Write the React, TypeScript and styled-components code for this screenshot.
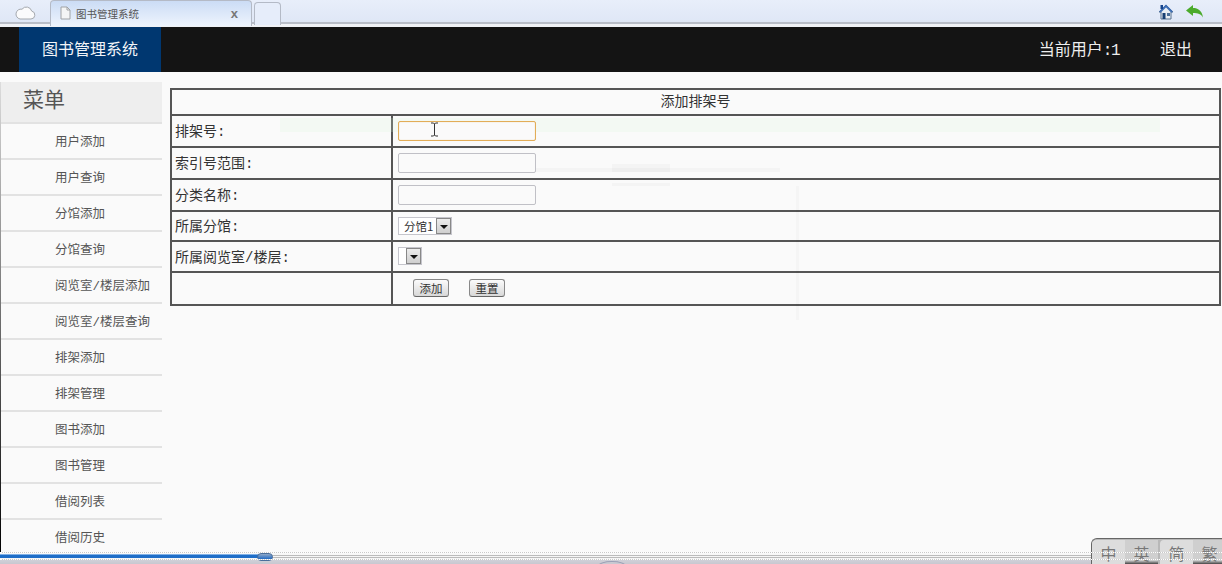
import styled, { createGlobalStyle } from "styled-components";

const GlobalStyle = createGlobalStyle`
html, body {
  margin: 0;
  padding: 0;
  background: #fafafa;
}
* {
  box-sizing: border-box;
}
`;

const FONT = `"Noto Sans CJK SC", "Liberation Sans", sans-serif`;
// the page's ascii glyphs sit wider than Noto's, the mono face gets close
const TEXT_FONT = `"Liberation Mono", "Noto Sans CJK SC", monospace`;

const menuItems = [
  "用户添加",
  "用户查询",
  "分馆添加",
  "分馆查询",
  "阅览室/楼层添加",
  "阅览室/楼层查询",
  "排架添加",
  "排架管理",
  "图书添加",
  "图书管理",
  "借阅列表",
  "借阅历史",
];

function App() {
  return (
    <>
      <GlobalStyle />
      <Page>
        <TabBar>
          <CloudButton>
            <svg width="21" height="15" viewBox="0 0 21 15">
              <path d="M5 14h11a4 4 0 0 0 .7-7.900A5.500 5.500 0 0 0 7 4.200 5 5 0 0 0 5 14z" fill="#fbfbfc" stroke="#a4a8ae" strokeWidth="1" />
            </svg>
          </CloudButton>
          <ActiveTab>
            <svg width="11" height="14" viewBox="0 0 11 14">
              <path d="M1 1h6l3 3v9H1z" fill="#f4f5f5" stroke="#a0a3a6" strokeWidth="1" />
              <path d="M7 1v3h3" fill="none" stroke="#a0a3a6" strokeWidth="1" />
            </svg>
            <TabTitle>图书管理系统</TabTitle>
            <TabClose>x</TabClose>
          </ActiveTab>
          <NewTab />
          <TabIcons>
            <svg width="16" height="16" viewBox="0 0 16 16">
              <path d="M8 1 1 8h2v7h10V8h2z" fill="#e8edf3" stroke="#56708f" strokeWidth="1" />
              <path d="M2 8 8 2l6 6" fill="none" stroke="#3f6fb5" strokeWidth="2" />
              <rect x="2.500" y="1" width="2.500" height="4" fill="#16448c" />
              <rect x="4.500" y="9" width="3" height="6" fill="#173f73" />
              <rect x="9" y="9" width="3" height="3" fill="#4a6e99" />
            </svg>
            <svg width="17" height="13" viewBox="0 0 17 13">
              <path d="M0 5.500 7 0v3c5 0 9 2.500 10 9.500-2-3.500-5-4.500-10-4.500v3z" fill="#4bab2b" />
            </svg>
          </TabIcons>
        </TabBar>
        <NavBar>
          <Brand>图书管理系统</Brand>
          <UserArea>
            <NavText>
              当前用户<NavAscii>:1</NavAscii>
            </NavText>
            <NavText>退出</NavText>
          </UserArea>
        </NavBar>
        <Main>
          <Sidebar>
            <MenuTitle>菜单</MenuTitle>
            {menuItems.map((item) => (
              <MenuItem key={item}>{item}</MenuItem>
            ))}
          </Sidebar>
          <Content>
            <FormTable>
              <colgroup>
                <col style={{ width: 221 }} />
                <col />
              </colgroup>
              <tbody>
                <HeadRow>
                  <HeadCell colSpan={2}>添加排架号</HeadCell>
                </HeadRow>
                <Row $height={32}>
                  <LabelCell>排架号:</LabelCell>
                  <FieldCell>
                    <TextField $focused />
                  </FieldCell>
                </Row>
                <Row $height={32}>
                  <LabelCell>索引号范围:</LabelCell>
                  <FieldCell>
                    <TextField />
                  </FieldCell>
                </Row>
                <Row $height={32}>
                  <LabelCell>分类名称:</LabelCell>
                  <FieldCell>
                    <TextField />
                  </FieldCell>
                </Row>
                <Row $height={30}>
                  <LabelCell>所属分馆:</LabelCell>
                  <FieldCell>
                    <SelectBox>
                      <SelectValue>分馆1</SelectValue>
                      <SelectArrow />
                    </SelectBox>
                  </FieldCell>
                </Row>
                <Row $height={31}>
                  <LabelCell>所属阅览室/楼层:</LabelCell>
                  <FieldCell>
                    <SelectBox>
                      <SelectValue />
                      <SelectArrow />
                    </SelectBox>
                  </FieldCell>
                </Row>
                <Row $height={33}>
                  <LabelCell />
                  <FieldCell>
                    <ButtonRow>
                      <FormButton>添加</FormButton>
                      <FormButton>重置</FormButton>
                    </ButtonRow>
                  </FieldCell>
                </Row>
              </tbody>
            </FormTable>
            <TextCursor width="9" height="15" viewBox="0 0 9 15">
              <path d="M1 1h2.500l1 1 1-1H8M4.500 2v11M1 14h2.500l1-1 1 1H8" fill="none" stroke="#333" strokeWidth="1" />
            </TextCursor>
            <Ghost $left={110} $top={36} $w={880} $h={14} $color="rgba(214, 245, 214, 0.2)" />
            <Ghost $left={283} $top={86} $w={327} $h={4} $color="rgba(0, 0, 0, 0.025)" />
            <Ghost $left={442} $top={82} $w={58} $h={8} $color="rgba(0, 0, 0, 0.025)" />
            <Ghost $left={442} $top={101} $w={58} $h={3} $color="rgba(0, 0, 0, 0.025)" />
            <Ghost $left={626} $top={104} $w={3} $h={134} $color="rgba(0, 0, 0, 0.02)" />
          </Content>
        </Main>
        <PlayerBar>
          <Dots />
          <Progress>
            <Played />
            <Knob />
          </Progress>
          <Dots />
          <Arch />
          <LangSwitch>
            <LangGroup>
              <LangKey>中</LangKey>
              <LangKey $active>英</LangKey>
            </LangGroup>
            <LangGroup>
              <LangKey>简</LangKey>
              <LangKey $active>繁</LangKey>
            </LangGroup>
          </LangSwitch>
        </PlayerBar>
      </Page>
    </>
  );
}

const Page = styled.div`
  width: 1222px;
  height: 564px;
  display: flex;
  flex-direction: column;
  overflow: hidden;
  position: relative;
  background: #fafafa;
  font-family: ${TEXT_FONT};
`;

const TabBar = styled.div`
  height: 27px;
  flex: none;
  display: flex;
  align-items: flex-start;
  padding-left: 1px;
  background: linear-gradient(
    #e8eefa 0,
    #dfe7f6 22px,
    #b9bec8 22px,
    #b9bec8 24px,
    #f0f2f6 24px
  );
`;

const CloudButton = styled.div`
  width: 49px;
  height: 25px;
  display: flex;
  align-items: center;
  justify-content: center;
  padding-right: 1px;
`;

const ActiveTab = styled.div`
  width: 202px;
  height: 26px;
  display: flex;
  align-items: center;
  padding: 0 13px 1px 9px;
  border: 1px solid #b4bac6;
  border-bottom: none;
  border-radius: 4px 4px 0 0;
  background: linear-gradient(#cbdcf5, #eef4fd);
`;

const TabTitle = styled.span`
  margin-left: 5px;
  font-family: ${FONT};
  font-size: 10.500px;
  color: #555;
`;

const TabClose = styled.span`
  margin-left: auto;
  font: bold 13px "Liberation Sans", sans-serif;
  color: #777;
`;

const NewTab = styled.div`
  width: 27px;
  height: 23px;
  margin: 2px 0 0 2px;
  border: 1px solid #b4bac6;
  border-bottom: none;
  border-radius: 4px 4px 0 0;
  background: #e6edfa;
`;

const TabIcons = styled.div`
  margin-left: auto;
  height: 22px;
  display: flex;
  align-items: center;
  gap: 12px;
  padding: 1px 19px 0 0;
`;

const NavBar = styled.div`
  height: 45px;
  flex: none;
  display: flex;
  justify-content: space-between;
  padding-left: 19px;
  background: #141414;
`;

const Brand = styled.div`
  width: 142px;
  display: flex;
  align-items: center;
  justify-content: center;
  padding-bottom: 4px;
  font-size: 16px;
  color: #f2f4f8;
  background: #003770;
`;

const UserArea = styled.div`
  display: flex;
  align-items: center;
  gap: 41px;
  padding: 0 30px 4px 0;
`;

const NavText = styled.span`
  font-size: 16px;
  color: #eeeeee;
`;

const NavAscii = styled.span`
  letter-spacing: -1.500px;
`;

const Main = styled.div`
  flex: 1;
  min-height: 0;
  display: flex;
  padding-top: 10px;
  gap: 8px;
  overflow: hidden;
`;

const Sidebar = styled.div`
  width: 162px;
  flex: none;
  border-left: 1px solid;
  border-image: linear-gradient(#dddddd, #000000) 1;
`;

const MenuTitle = styled.div`
  height: 42px;
  padding: 0 0 9px 22px;
  display: flex;
  align-items: center;
  font-size: 21px;
  color: #555;
  background: #eeeeee;
  border-bottom: 2px solid #e2e2e2;
`;

const MenuItem = styled.div`
  height: 36px;
  display: flex;
  align-items: center;
  padding: 0 0 2px 54px;
  font-size: 12.500px;
  white-space: nowrap;
  color: #555;
  border-bottom: 2px solid #e2e2e2;
`;

const Content = styled.div`
  flex: 1;
  min-width: 0;
  padding: 6px 1px 0 0;
  position: relative;
`;

const FormTable = styled.table`
  width: 100%;
  table-layout: fixed;
  border-collapse: collapse;
  border: 2px solid #555;
  font-size: 14px;
  color: #333;
  background: #fafafa;
`;

const HeadRow = styled.tr`
  height: 26px;
`;

const HeadCell = styled.td`
  padding: 0 0 4px;
  text-align: center;
  border: 2px solid #555;
`;

const Row = styled.tr<{ $height: number }>`
  height: ${(p) => p.$height}px;
`;

const LabelCell = styled.td`
  padding: 0 0 2px 3px;
  white-space: nowrap;
  border: 2px solid #555;
`;

const FieldCell = styled.td`
  padding: 0 0 1px 5px;
  border: 2px solid #555;
  vertical-align: middle;
`;

const TextField = styled.input<{ $focused?: boolean }>`
  display: block;
  position: relative;
  z-index: 1;
  width: 138px;
  height: 20px;
  padding: 0;
  border-radius: 2px;
  background: #fafafa;
  border: 1px solid ${(p) => (p.$focused ? "#e2ad58" : "#c0c0c6")};
  box-shadow: ${(p) => (p.$focused ? "inset 0 0 1px #e8bf78" : "none")};
`;

const SelectBox = styled.div`
  display: flex;
  align-items: stretch;
  width: fit-content;
  height: 18px;
  border: 1px solid #c5c5cc;
  background: #fff;
`;

const SelectValue = styled.span`
  min-width: 7px;
  padding: 0 3px 0 5px;
  font-family: ${FONT};
  font-size: 11.500px;
  line-height: 16px;
  color: #333;

  &:empty {
    padding: 0;
    min-width: 7px;
  }
`;

const SelectArrow = styled.span`
  width: 15px;
  border: 1px solid #888;
  background: linear-gradient(#ececec, #cfcfcf);
  position: relative;

  &::after {
    content: "";
    position: absolute;
    left: 3px;
    top: 6px;
    border: 4px solid transparent;
    border-top: 4px solid #111;
    border-bottom: none;
  }
`;

const ButtonRow = styled.div`
  display: flex;
  gap: 20px;
  padding-left: 15px;
`;

const FormButton = styled.button`
  width: 36px;
  height: 18px;
  padding: 0;
  font-family: ${FONT};
  font-size: 11.500px;
  line-height: 14px;
  color: #333;
  border: 1px solid #888;
  border-bottom-color: #666;
  border-radius: 3px;
  background: linear-gradient(#fbfbfb, #d8d8d8);
`;

const TextCursor = styled.svg`
  position: absolute;
  z-index: 2;
  left: 260px;
  top: 40px;
`;

// faint leftovers of an earlier frame lying over the form
const Ghost = styled.div<{ $left: number; $top: number; $w: number; $h: number; $color: string }>`
  position: absolute;
  left: ${(p) => p.$left}px;
  top: ${(p) => p.$top}px;
  width: ${(p) => p.$w}px;
  height: ${(p) => p.$h}px;
  background: ${(p) => p.$color};
  pointer-events: none;
`;

const PlayerBar = styled.div`
  height: 12px;
  flex: none;
  position: relative;
  background: linear-gradient(#fafafa 0, #f4f4f4 7px, #d0d0d8 8px, #c8c8d0 12px);
`;

const Dots = styled.div`
  height: 1px;
  position: relative;
  z-index: 2;
  border-top: 1px dotted #ffffff;
  background: #c8c8c8;
`;

const Progress = styled.div`
  height: 3px;
  margin: 2px 0 1px;
  position: relative;
  border-top: 1px solid #bbbbbb;
  border-bottom: 1px solid #bbbbbb;
`;

const Played = styled.div`
  position: absolute;
  left: 0;
  top: -2px;
  width: 262px;
  height: 4px;
  border-top: 1px solid #7fb0e6;
  background: #1e6ec8;
`;

const Knob = styled.div`
  position: absolute;
  left: 257px;
  top: -3px;
  width: 16px;
  height: 8px;
  border-radius: 4px;
  background: linear-gradient(#8fa8c8, #0b5fc4);
  border: 1px solid #4a6f9c;
`;

const Arch = styled.div`
  position: absolute;
  left: 598px;
  top: 9px;
  width: 28px;
  height: 10px;
  border: 1px solid #9a9fb5;
  border-radius: 50%;
`;

const LangSwitch = styled.div`
  position: absolute;
  right: 0;
  bottom: 0;
  display: flex;
  gap: 2px;
  width: 131px;
  height: 26px;
  padding-top: 1px;
  border: 1px solid #666;
  border-right: none;
  border-bottom: none;
  border-radius: 6px 0 0 0;
  background: #b8b8b8;
`;

const LangGroup = styled.div`
  display: flex;
  border-radius: 4px 4px 0 0;
  background: #dddddd;
`;

const LangKey = styled.span<{ $active?: boolean }>`
  width: 33px;
  font-family: ${FONT};
  font-size: 16px;
  line-height: 26px;
  text-align: center;
  color: #777;
  background: ${(p) => (p.$active ? "linear-gradient(#cfcfcf 85%, #444 100%)" : "transparent")};
`;

export default App;
